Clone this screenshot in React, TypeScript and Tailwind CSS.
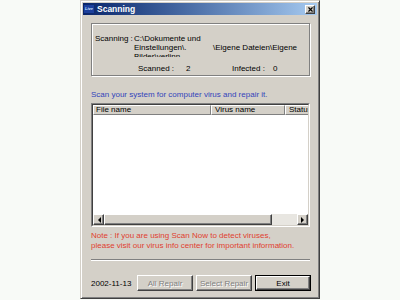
import { X } from 'lucide-react';

const raised =
  'border border-t-white border-l-white border-r-[#404040] border-b-[#404040] shadow-[inset_-1px_-1px_0_#808080] bg-[#d4d0c8]';

function Arrow({ dir }: { dir: 'left' | 'right' }) {
  return (
    <div className={`${raised} flex h-[11px] w-[11px] shrink-0 items-center justify-center`}>
      <svg width="4" height="6" viewBox="0 0 4 6">
        {dir === 'left' ? <path d="M4 0 L1 3 L4 6 Z" fill="#000" /> : <path d="M0 0 L3 3 L0 6 Z" fill="#000" />}
      </svg>
    </div>
  );
}

function Button({ label, disabled, primary }: { label: string; disabled?: boolean; primary?: boolean }) {
  const face = (
    <div
      className={`${raised} flex h-full w-full items-center justify-center ${
        disabled ? 'text-[#808080] [text-shadow:1px_1px_0_#fff]' : 'text-black'
      }`}
    >
      {label}
    </div>
  );
  if (primary) {
    return <div className="h-[16px] w-[56px] border border-black">{face}</div>;
  }
  return <div className="h-[16px] w-[56px]">{face}</div>;
}

export default function App() {
  return (
    <div className="flex h-[300px] w-[400px] bg-[#f8faf7] font-['Liberation_Sans',Arial,sans-serif] text-[8px] leading-[9px] text-black">
      <div className="ml-[80px] flex h-[299px] w-[240px] flex-col border border-t-[#d4d0c8] border-l-[#d4d0c8] border-r-[#404040] border-b-[#404040] bg-[#d4d0c8] p-[2px] shadow-[inset_1px_1px_0_#fff,inset_-1px_-1px_0_#808080]">
        {/* title bar */}
        <div className="flex h-[12px] shrink-0 items-center bg-linear-to-r from-[#0a246a] to-[#a6caf0]">
          <div className="ml-[1px] flex h-[8px] w-[10px] items-center justify-center bg-[#1c3f9c] text-[4px] leading-[4px] font-bold italic text-[#cfe3ff]">
            Live
          </div>
          <span className="ml-[3px] text-[8.5px] font-bold text-white">Scanning</span>
          <div className={`${raised} ml-auto mr-[2px] flex h-[9px] w-[10px] items-center justify-center`}>
            <X size={7} strokeWidth={4} color="#000" />
          </div>
        </div>

        <div className="flex flex-1 flex-col pl-[8px] pr-[7px]">
          {/* group box */}
          <div className="mt-[8px] h-[53px] border border-[#808080] pt-[10px] pl-[3px] shadow-[inset_1px_1px_0_#fff,1px_1px_0_#fff]">
            <div className="flex">
              <span className="w-[39px] shrink-0 whitespace-nowrap">Scanning :</span>
              <div className="h-[23px] flex-1 overflow-hidden whitespace-nowrap">
                <div>C:\Dokumente und</div>
                <div className="flex">
                  <span className="w-[79px] shrink-0">Einstellungen\.</span>
                  <span>\Eigene Dateien\Eigene</span>
                </div>
                <div>Bilder\verlinn</div>
              </div>
            </div>
            <div className="mt-[7px] flex whitespace-nowrap">
              <span className="ml-[43px] w-[48px]">Scanned :</span>
              <span className="w-[46px]">2</span>
              <span className="w-[41px]">Infected :</span>
              <span>0</span>
            </div>
          </div>

          <div className="mt-[14px] text-[#3344bb]">Scan your system for computer virus and repair it.</div>

          {/* list view */}
          <div className="mt-[4px] h-[124px] border border-t-[#808080] border-l-[#808080] border-r-white border-b-white">
            <div className="flex h-full flex-col border border-t-[#404040] border-l-[#404040] border-r-[#d4d0c8] border-b-[#d4d0c8] bg-white">
              <div className="flex h-[10px] shrink-0 overflow-hidden">
                <div className="w-[118px] shrink-0 border-t border-l border-t-white border-l-white border-r border-b border-r-[#808080] border-b-[#808080] bg-[#d4d0c8] pl-[2px] leading-[8px]">
                  File name
                </div>
                <div className="w-[74px] shrink-0 border-t border-l border-t-white border-l-white border-r border-b border-r-[#808080] border-b-[#808080] bg-[#d4d0c8] pl-[3px] leading-[8px]">
                  Virus name
                </div>
                <div className="flex-1 overflow-hidden whitespace-nowrap border-t border-l border-t-white border-l-white border-b border-b-[#808080] bg-[#d4d0c8] pl-[3px] leading-[8px]">
                  Status
                </div>
              </div>
              <div className="flex-1" />
              <div className="flex h-[11px] shrink-0">
                <Arrow dir="left" />
                <div className={`${raised} w-[168px] shrink-0`} />
                <div className="flex-1 bg-[#e8e6e1]" />
                <Arrow dir="right" />
              </div>
            </div>
          </div>

          <div className="mt-[4px] leading-[9.5px] text-[#e04030]">
            <div>Note : If you are using Scan Now to detect viruses,</div>
            <div>please visit our virus info center for important information.</div>
          </div>

          <div className="mt-[9px] h-[2px] border-t border-t-[#808080] border-b border-b-white" />

          <div className="mt-[14px] flex items-center">
            <span className="w-[46px] shrink-0">2002-11-13</span>
            <div className="flex gap-[3px]">
              <Button label="All Repair" disabled />
              <Button label="Select Repair" disabled />
              <Button label="Exit" primary />
            </div>
          </div>
        </div>
      </div>
    </div>
  );
}
